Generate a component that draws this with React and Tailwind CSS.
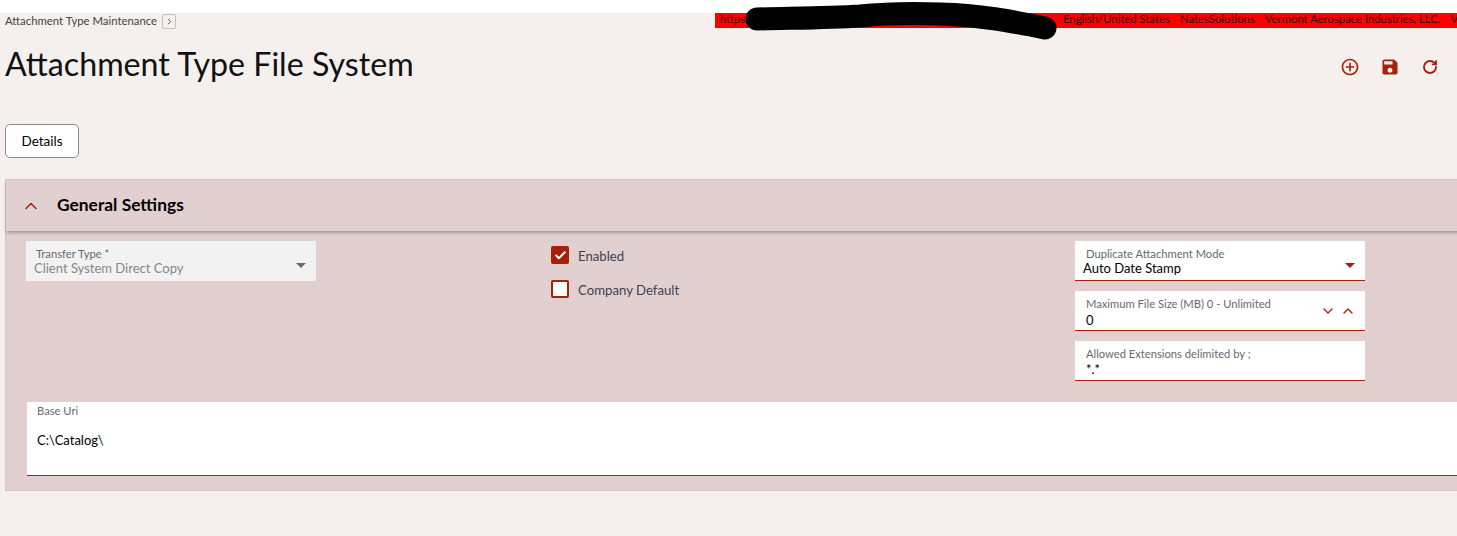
import React from "react";
import { ChevronUp, ChevronDown, ChevronRight, RotateCw, Check } from "lucide-react";
import { MdSave, MdAddCircleOutline } from "react-icons/md";

const font = "font-['Lato','Noto_Sans',sans-serif]";

function Caret({ className }) {
  return (
    <svg width="10" height="5" viewBox="0 0 10 5" className={className}>
      <path d="M0 0h10L5 5z" fill="currentColor" />
    </svg>
  );
}

function Field({ label, value, right, disabled, labelPad = "pl-[11px]", valueGap = "", className = "" }) {
  return (
    <div className={`relative w-[290px] h-10 pt-[6px] ${disabled ? "bg-[#f2f2f2]" : "bg-white border-b border-[#a6200c]"} ${className}`}>
      <div className={`text-[11.2px] leading-[14px] text-[#66696e] ${labelPad}`}>{label}</div>
      <div className={`text-[13px] leading-[15px] pl-2 ${valueGap} ${disabled ? "text-[#85878a]" : "text-black"}`}>{value}</div>
      {right}
    </div>
  );
}

export default function App() {
  return (
    <div className={`h-[536px] w-[1457px] overflow-hidden bg-[#f5f0ee] relative ${font}`}>
      <div className="h-[13px] bg-white" />

      <div className="flex items-start h-[15px]">
        <div className="w-[715px] flex items-center pl-[5px] h-[15px]">
          <span className="text-[11.35px] text-[#444] leading-[15px]">Attachment Type Maintenance</span>
          <span className="ml-[5px] mt-[2px] w-[14px] h-[15px] border border-[#c4c0be] rounded-[2px] flex items-center justify-center shrink-0">
            <ChevronRight size={9} strokeWidth={2.5} className="text-[#444]" />
          </span>
        </div>
        <div className="flex-1 h-[15px] bg-[#ff0000] text-[11.3px] leading-[12px] text-[#2a0000] whitespace-nowrap overflow-hidden flex pl-[5px]">
          <span className="w-[343px] shrink-0 overflow-hidden">https://</span>
          <span>English/United States</span>
          <span className="ml-[10px]">NatesSolutions</span>
          <span className="ml-[10px]">Vermont Aerospace Industries, LLC.</span>
          <span className="ml-[10px]">V</span>
        </div>
      </div>

      <div className="flex items-center justify-between h-[73px] pl-[5px] pr-[17px]">
        <h1 className="text-[32.2px] leading-[44px] pb-[2px] box-content text-[#111] font-normal">Attachment Type File System</h1>
        <div className="flex items-center gap-[20px] text-[#a6200c] mt-[5px]">
          <MdAddCircleOutline size={20} />
          <MdSave size={20} />
          <RotateCw size={16} strokeWidth={2.8} className="mx-[2px]" />
        </div>
      </div>

      <div className="pl-[5px] pt-[23px]">
        <button className="w-[74px] h-[34px] bg-white border border-[#8a8a8a] rounded-[5px] text-[13.5px] text-black">Details</button>
      </div>

      <section className="mt-[21px] ml-[5px] w-[1460px] h-[312px] bg-[#e2d0d0] border border-[#d0caca]">
        <div className="flex items-center h-[51px] shadow-[0_2px_3px_rgba(0,0,0,0.25)] pt-[1px] pb-[1px]">
          <ChevronUp size={20} strokeWidth={1.8} className="ml-[15px] text-[#a6200c]" />
          <h2 className="ml-[16px] text-[17.4px] font-bold text-black">General Settings</h2>
        </div>

        <div className="flex items-start pl-[20px] pt-[10px]">
          <Field
            disabled
            labelPad="pl-[10px]"
            label="Transfer Type *"
            value="Client System Direct Copy"
            right={<Caret className="absolute right-[10px] top-[22px] text-[#6b6b6b]" />}
          />
          <div className="ml-[235px] w-[524px] flex flex-col gap-[16px] pt-[5px] text-[13.2px] text-[#3f4250]">
            <label className="flex items-center h-[18px]">
              <span className="w-[18px] h-[18px] bg-[#a6200c] rounded-[2px] flex items-center justify-center">
                <Check size={13} strokeWidth={3.5} className="text-white" />
              </span>
              <span className="ml-[9px] pt-[4px]">Enabled</span>
            </label>
            <label className="flex items-center h-[18px]">
              <span className="w-[18px] h-[18px] bg-white border-2 border-[#a6200c] rounded-[2px]" />
              <span className="ml-[9px] pt-[4px]">Company Default</span>
            </label>
          </div>
          <div className="flex flex-col gap-[10px]">
            <Field
              label="Duplicate Attachment Mode"
              value="Auto Date Stamp"
              right={<Caret className="absolute right-[10px] top-[22px] text-[#a6200c]" />}
            />
            <Field
              label="Maximum File Size (MB) 0 - Unlimited"
              valueGap="pt-[2px]"
              value={<span className="pl-[3px]">0</span>}
              right={
                <div className="absolute right-[9px] top-[12px] flex gap-[4px] text-[#a6200c]">
                  <ChevronDown size={16} strokeWidth={2} />
                  <ChevronUp size={16} strokeWidth={2} />
                </div>
              }
            />
            <Field label="Allowed Extensions delimited by ;" valueGap="pt-[1px]" value={<span className="pl-[3px]">*.*</span>} />
          </div>
        </div>

        <div className="ml-[21px] mt-[21px] h-[74px] bg-white border-b border-[#a6200c] pl-[10px]">
          <div className="text-[11.2px] leading-[14px] pt-[2px] text-[#66696e]">Base Uri</div>
          <div className="text-[13px] leading-[18px] mt-[13px] text-black">C:\Catalog\</div>
        </div>
      </section>

      <svg className="absolute left-[740px] top-0" width="325" height="42" viewBox="0 0 325 42">
        <path
          d="M17 19 C60 18 90 18 120 16 C150 13 170 13 200 14 C240 15 270 21 305 28"
          fill="none"
          stroke="#000"
          strokeWidth="23"
          strokeLinecap="round"
        />
      </svg>
    </div>
  );
}
